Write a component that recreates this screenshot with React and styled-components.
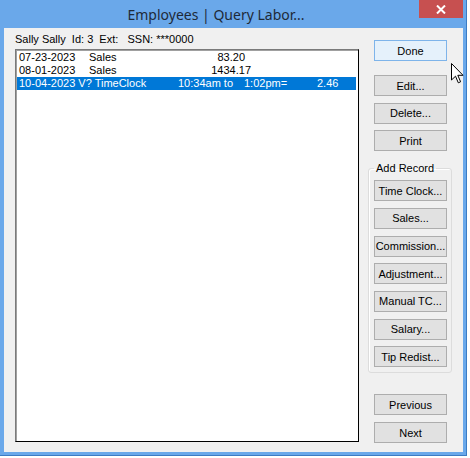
import React from 'react';
import styled, { createGlobalStyle } from 'styled-components';

const GlobalStyle = createGlobalStyle`
  body {
    margin: 0;
    background: #ffffff;
  }
`;

const Window = styled.div`
  position: relative;
  box-sizing: border-box;
  width: 467px;
  height: 456px;
  padding: 0 3px 3px 4px;
  background: #6aa8ea;
  border-right: 1px solid #3c7cc4;
  border-bottom: 1px solid #3c7cc4;
  display: flex;
  flex-direction: column;
  font-family: "Liberation Sans", Arial, sans-serif;
`;

const TitleBar = styled.div`
  height: 28px;
  display: flex;
  align-items: flex-start;
`;

const Title = styled.div`
  flex: 1;
  height: 28px;
  padding-left: 9px;
  display: flex;
  align-items: center;
  justify-content: center;
  font-family: "Noto Sans", "Open Sans", sans-serif;
  font-size: 14px;
  color: #1e2a38;
`;

const CloseButton = styled.div`
  width: 44px;
  height: 18px;
  background: #c75050;
  display: flex;
  align-items: center;
  justify-content: center;
`;

const Client = styled.div`
  flex: 1;
  display: flex;
  background: #f0f0f0;
  padding: 5px 11px 0 11px;
  min-height: 0;
`;

const LeftColumn = styled.div`
  width: 344px;
  display: flex;
  flex-direction: column;
  padding-bottom: 10px;
`;

const InfoLine = styled.div`
  font-size: 11px;
  line-height: 13px;
  color: #000;
  white-space: pre;
`;

const ListBox = styled.div`
  flex: 1;
  margin-top: 3px;
  box-sizing: border-box;
  background: #fff;
  border: 1px solid #000;
  border-top-color: #7a7a7a;
  border-left-color: #7a7a7a;
  box-shadow: inset 1px 1px 0 #a0a0a0;
  padding: 1px 2px 1px 1px;
`;

const Row = styled.div`
  display: flex;
  height: 13px;
  line-height: 13px;
  font-size: 11px;
  padding-left: 2px;
  white-space: pre;
  background: ${p => (p.$selected ? '#0078d7' : 'transparent')};
  color: ${p => (p.$selected ? '#fff' : '#000')};
`;

const Cell = styled.span`
  width: ${p => (p.$w ? `${p.$w}px` : 'auto')};
  text-align: ${p => p.$align || 'left'};
`;

const RightColumn = styled.div`
  width: 84px;
  margin-left: 9px;
  display: flex;
  flex-direction: column;
  padding: 7px 0 9px 0;
`;

const ButtonStack = styled.div`
  display: flex;
  flex-direction: column;
  gap: 6.67px;
  padding-left: 6px;
  margin-top: ${p => p.$top || 0}px;
`;

const Button = styled.button`
  box-sizing: border-box;
  width: 73px;
  height: 21px;
  padding: 0;
  margin: 0;
  font-family: "Liberation Sans", Arial, sans-serif;
  font-size: 11px;
  color: #000;
  background: ${p => (p.$primary ? '#e5f1fb' : '#e1e1e1')};
  border: 1px solid ${p => (p.$primary ? '#7eb4ea' : '#adadad')};
  white-space: nowrap;
`;

const GroupBox = styled.fieldset`
  box-sizing: border-box;
  width: 84px;
  margin: 11px 0 0 0;
  padding: 5px 0 5px 5px;
  border: 1px solid #dcdcdc;
  border-radius: 3px;
  box-shadow: inset 1px 1px 0 #fff;
`;

const Legend = styled.legend`
  font-size: 11px;
  line-height: 13px;
  padding: 0 2px;
  margin-left: 0;
  color: #000;
`;

const GroupButtons = styled.div`
  display: flex;
  flex-direction: column;
  gap: 6.67px;
`;

const Spacer = styled.div`
  flex: 1;
`;

const Cursor = styled.svg`
  position: absolute;
  left: 451px;
  top: 63px;
`;

const groupItems = ['Time Clock...', 'Sales...', 'Commission...', 'Adjustment...', 'Manual TC...', 'Salary...', 'Tip Redist...'];

export default function App() {
  return (
    <>
      <GlobalStyle />
      <Window>
        <TitleBar>
          <Title>Employees | Query Labor...</Title>
          <CloseButton>
            <svg width="10" height="9" viewBox="0 0 10 9">
              <path d="M1 0.5 L9 8.5 M9 0.5 L1 8.5" stroke="#fff" strokeWidth="2" />
            </svg>
          </CloseButton>
        </TitleBar>
        <Client>
          <LeftColumn>
            <InfoLine>{'Sally Sally  Id: 3  Ext:   SSN: ***0000'}</InfoLine>
            <ListBox>
              <Row>
                <Cell $w={70}>07-23-2023</Cell>
                <Cell $w={100}>Sales</Cell>
                <Cell $w={56} $align="right">83.20</Cell>
              </Row>
              <Row>
                <Cell $w={70}>08-01-2023</Cell>
                <Cell $w={100}>Sales</Cell>
                <Cell $w={62} $align="right">1434.17</Cell>
              </Row>
              <Row $selected>
                <Cell $w={159}>10-04-2023 V? TimeClock</Cell>
                <Cell $w={66}>10:34am to</Cell>
                <Cell $w={73}>1:02pm=</Cell>
                <Cell>2.46</Cell>
              </Row>
            </ListBox>
          </LeftColumn>
          <RightColumn>
            <ButtonStack>
              <Button $primary>Done</Button>
            </ButtonStack>
            <ButtonStack $top={14}>
              <Button>Edit...</Button>
              <Button>Delete...</Button>
              <Button>Print</Button>
            </ButtonStack>
            <GroupBox>
              <Legend>Add Record</Legend>
              <GroupButtons>
                {groupItems.map(label => (
                  <Button key={label}>{label}</Button>
                ))}
              </GroupButtons>
            </GroupBox>
            <Spacer />
            <ButtonStack>
              <Button>Previous</Button>
              <Button>Next</Button>
            </ButtonStack>
          </RightColumn>
        </Client>
        <Cursor width="13" height="21" viewBox="0 0 13 21">
          <path d="M0.5 0.5 L0.5 17 L4.5 13.2 L7.3 19.8 L9.6 18.8 L6.8 12.3 L12 12.3 Z" fill="#fff" stroke="#000" strokeWidth="1" />
        </Cursor>
      </Window>
    </>
  );
}
